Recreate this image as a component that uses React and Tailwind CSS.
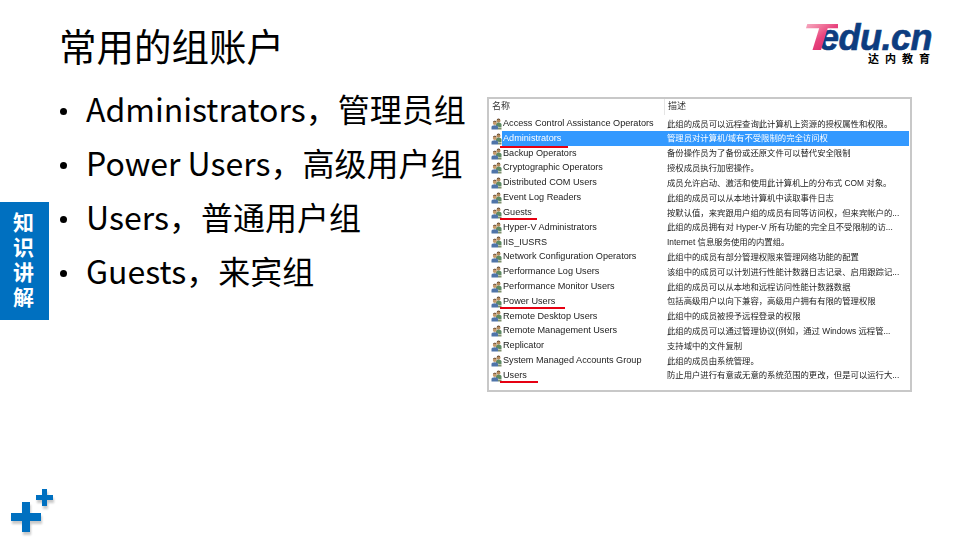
import React from "react";

const groups = [
  ["Access Control Assistance Operators", "此组的成员可以远程查询此计算机上资源的授权属性和权限。"],
  ["Administrators", "管理员对计算机/域有不受限制的完全访问权", "selected", "w-[68px] top-[14px]"],
  ["Backup Operators", "备份操作员为了备份或还原文件可以替代安全限制"],
  ["Cryptographic Operators", "授权成员执行加密操作。"],
  ["Distributed COM Users", "成员允许启动、激活和使用此计算机上的分布式 COM 对象。"],
  ["Event Log Readers", "此组的成员可以从本地计算机中读取事件日志"],
  ["Guests", "按默认值，来宾跟用户组的成员有同等访问权，但来宾帐户的...", null, "w-[37px] top-[12px]"],
  ["Hyper-V Administrators", "此组的成员拥有对 Hyper-V 所有功能的完全且不受限制的访..."],
  ["IIS_IUSRS", "Internet 信息服务使用的内置组。"],
  ["Network Configuration Operators", "此组中的成员有部分管理权限来管理网络功能的配置"],
  ["Performance Log Users", "该组中的成员可以计划进行性能计数器日志记录、启用跟踪记..."],
  ["Performance Monitor Users", "此组的成员可以从本地和远程访问性能计数器数据"],
  ["Power Users", "包括高级用户以向下兼容，高级用户拥有有限的管理权限", null, "w-[65px] top-[12px]"],
  ["Remote Desktop Users", "此组中的成员被授予远程登录的权限"],
  ["Remote Management Users", "此组的成员可以通过管理协议(例如，通过 Windows 远程管..."],
  ["Replicator", "支持域中的文件复制"],
  ["System Managed Accounts Group", "此组的成员由系统管理。"],
  ["Users", "防止用户进行有意或无意的系统范围的更改，但是可以运行大...", null, "w-[38px] top-[12px]"],
];

const bullets = ["Administrators，管理员组", "Power Users，高级用户组", "Users，普通用户组", "Guests，来宾组"];

function GroupIcon() {
  return (
    <svg viewBox="0 0 11 12" className="w-[11px] h-3 shrink-0">
      <circle cx="7.5" cy="2.8" r="2" fill="#b58a5c" />
      <path d="M5 8V6q0-1.500 2.500-1.500T10.500 6v3H8z" fill="#5d8a62" />
      <circle cx="3.8" cy="5" r="2" fill="#c49a6c" />
      <path d="M0.500 11.500V9q0-1.800 3.300-1.800T7 9v2.500z" fill="#4f74a8" />
      <path d="M7 11.500V9.500h3.500v2z" fill="#7c8f6a" />
      <path d="M2.300 3.600q1.500-.9 3 0M6 1.500q1.500-.9 3 0" stroke="#4a3320" strokeWidth="0.8" fill="none" />
    </svg>
  );
}

function GroupRow({ name, desc, selected, underline }) {
  return (
    <div className="flex h-[14.82px] items-center pl-[2px] pr-[1px]">
      <GroupIcon />
      <div className={`flex flex-1 h-full items-center min-w-0 ${selected ? "bg-[#3399ff] text-white" : ""}`}>
        <div className="relative w-[165px] pl-[1px] shrink-0 text-[9.15px]">
          {name}
          {underline && <span className={`absolute left-[-2px] h-[2px] bg-[#e60012] ${underline}`} />}
        </div>
        <div className="whitespace-nowrap text-[8.35px]">{desc}</div>
      </div>
    </div>
  );
}

function Logo() {
  return (
    <div className="w-[127px] mt-[24px] flex flex-col items-end font-['Liberation_Sans',sans-serif]">
      <div className="flex h-[28px] w-full items-end justify-end italic font-bold leading-[28px]">
        <span className="inline-block text-[36px] origin-right scale-x-[1.65] bg-gradient-to-br from-[#f5b5ca] via-[#e8447f] to-[#d3155f] bg-clip-text text-transparent mr-[-19px]">T</span>
        <span className="text-[36px] tracking-[-0.5px] text-[#0d3d80] [-webkit-text-stroke:0.6px_#0d3d80]">edu.cn</span>
      </div>
      <div className="text-[11px] leading-[12px] font-bold tracking-[6px] mr-[-4px] text-black font-['Noto_Sans_CJK_SC',sans-serif]">达内教育</div>
    </div>
  );
}

function Plus() {
  return (
    <svg viewBox="0 0 60 56" className="w-[60px] h-[56px]">
      <defs>
        <filter id="plusShadow" x="-20%" y="-20%" width="150%" height="150%">
          <feGaussianBlur stdDeviation="1.3" />
        </filter>
      </defs>
      <g fill="#777" opacity="0.4" filter="url(#plusShadow)" transform="translate(1 3)">
        <path d="M42 5h5v6h6v5h-6v6h-5v-6h-6v-5h6z" />
        <path d="M22 18h8v11h11v8H30v11h-8V37H11v-8h11z" />
      </g>
      <g fill="#0070c0">
        <path d="M42 5h5v6h6v5h-6v6h-5v-6h-6v-5h6z" />
        <path d="M22 18h8v11h11v8H30v11h-8V37H11v-8h11z" />
      </g>
    </svg>
  );
}

export default function App() {
  return (
    <div className="w-[960px] h-[540px] bg-white overflow-hidden flex flex-col text-black font-['Noto_Sans_CJK_SC',sans-serif]">
      <header className="flex justify-between h-[84px] pl-[59px] pr-[28px]">
        <h1 className="text-[37.5px] leading-[54px] mt-[18px] font-normal">常用的组账户</h1>
        <Logo />
      </header>

      <main className="flex flex-1 items-start">
        <div className="w-[49px] h-[118px] mt-[118px] pr-[2px] pb-[5px] bg-[#0070c0] shrink-0 flex flex-col items-center justify-center text-white text-[21px] leading-[25px] font-bold">
          <span>知</span>
          <span>识</span>
          <span>讲</span>
          <span>解</span>
        </div>

        <ul className="ml-[11px] w-[415px] shrink-0">
          {bullets.map((b) => (
            <li key={b} className="flex items-center h-[54px] text-[32px] whitespace-nowrap">
              <span className="w-[7px] h-[7px] rounded-full bg-black mr-[19px] shrink-0" />
              <span className="pb-[6px]">{b}</span>
            </li>
          ))}
        </ul>

        <section className="ml-[12px] mt-[13px] w-[425px] h-[295px] border-2 border-[#c8c8c8] bg-white text-[#222] font-['Liberation_Sans','Noto_Sans_CJK_SC',sans-serif] blur-[0.3px]">
          <div className="flex h-[16px] items-center pl-[3px] text-[#333] text-[9px]">
            <span className="w-[172px]">名称</span>
            <span className="border-l border-[#e5e5e5] pl-[3px] h-full flex items-center">描述</span>
          </div>
          <div className="mt-[1.5px]">
            {groups.map(([name, desc, selected, underline]) => (
              <GroupRow key={name} name={name} desc={desc} selected={selected} underline={underline} />
            ))}
          </div>
        </section>
      </main>

      <footer className="h-[56px] shrink-0">
        <Plus />
      </footer>
    </div>
  );
}
